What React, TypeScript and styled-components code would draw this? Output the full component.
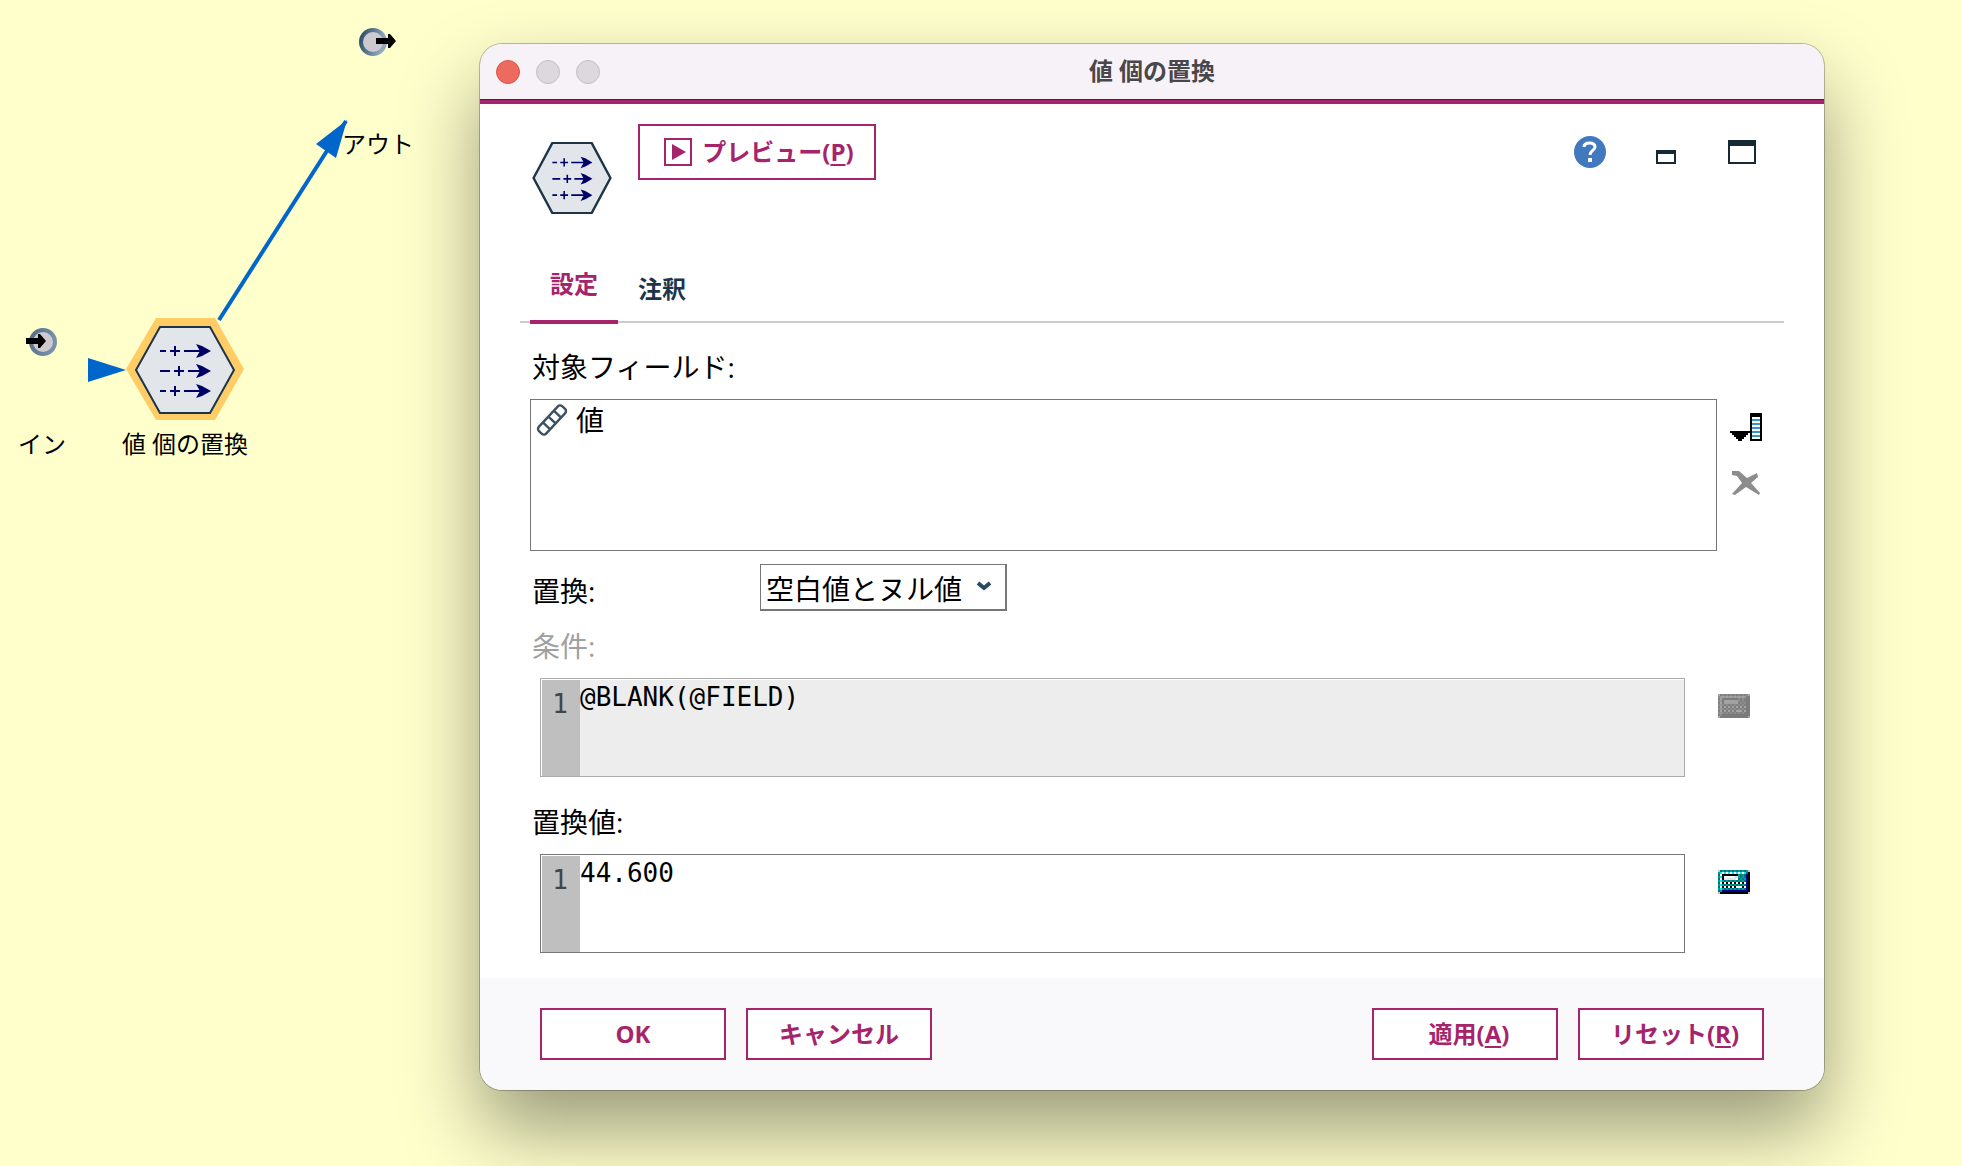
import React from "react";
import styled, { createGlobalStyle } from "styled-components";

const accent = "#a5246c";
const ink = "#1c3549";
const uiFont = `"Open Sans", "Noto Sans CJK JP", sans-serif`;
const monoFont = `"DejaVu Sans Mono", "Noto Sans CJK JP", monospace`;

const GlobalStyle = createGlobalStyle`
  *, *::before, *::after { box-sizing: border-box; }
  body { margin: 0; background: #ffffcc; }
  button, select, textarea { font: inherit; color: inherit; }
`;

/* ---------- stream canvas ---------- */

const Canvas = styled.main`
  position: relative;
  min-height: 100vh;
  overflow: hidden;
  background: #ffffcc;
  color: #000;
  font-family: ${uiFont};
  font-size: 24px;
  line-height: 36px;
`;

const Links = styled.svg`
  position: absolute;
  left: 0;
  top: 0;
`;

const Node = styled.figure<{ $x: number; $y: number; $w: number; $h: number }>`
  position: absolute;
  left: ${(p) => p.$x}px;
  top: ${(p) => p.$y}px;
  width: ${(p) => p.$w}px;
  height: ${(p) => p.$h}px;
  margin: 0;
  display: flex;
  flex-direction: column;
  align-items: center;
  justify-content: space-between;
  white-space: nowrap;
`;

/* ---------- dialog window ---------- */

const Dialog = styled.section`
  position: absolute;
  left: 480px;
  right: 138px;
  top: 44px;
  border-radius: 22px;
  background: #fff;
  box-shadow: 0 0 0 1px rgba(0, 0, 0, 0.25), 0 40px 80px rgba(0, 0, 0, 0.4);
`;

const TitleBar = styled.header`
  display: grid;
  grid-template-columns: 1fr auto 1fr;
  align-items: center;
  height: 60px;
  padding: 0 16px;
  border-bottom: 4px solid ${accent};
  border-radius: 22px 22px 0 0;
  background: #f6f2f8;
  box-shadow: inset 0 -1px 0 #82004f;
`;

const Lights = styled.div`
  display: flex;
  gap: 16px;
`;

const Light = styled.button<{ $fill: string; $edge: string }>`
  width: 24px;
  height: 24px;
  padding: 0;
  border: 1px solid ${(p) => p.$edge};
  border-radius: 50%;
  background: ${(p) => p.$fill};
`;

const Title = styled.h1`
  margin: 0;
  padding-bottom: 2px;
  font-size: 24px;
  line-height: 36px;
  font-weight: 700;
  color: #4a474b;
`;

const Toolbar = styled.div`
  display: flex;
  align-items: flex-start;
  gap: 26px;
  height: 156px;
  padding: 20px 44px 0 52px;
`;

const NodeBadge = styled.div`
  display: flex;
  padding-top: 18px;
`;

const OutlineButton = styled.button<{ $mnemonic?: boolean }>`
  display: inline-flex;
  align-items: center;
  justify-content: center;
  gap: 10px;
  width: 186px;
  height: 52px;
  padding: 0 0 0 ${(p) => (p.$mnemonic ? "8px" : "0")};
  border: 2px solid ${accent};
  background: #fff;
  color: ${accent};
  font-size: 24px;
  line-height: 36px;
  font-weight: 700;
  white-space: nowrap;

  u {
    text-decoration-thickness: 2px;
    text-underline-offset: 3px;
  }
`;

const PreviewButton = styled(OutlineButton)`
  width: 238px;
  height: 56px;
  padding-left: 4px;
`;

const WindowTools = styled.div`
  display: flex;
  margin-left: auto;
`;

const ToolButton = styled.button`
  display: flex;
  align-items: center;
  justify-content: center;
  width: 76px;
  height: 56px;
  padding: 0;
  border: 0;
  background: none;
`;

const TabBar = styled.div`
  display: flex;
  align-items: flex-end;
  height: 63px;
  margin: 0 40px;
  padding-left: 10px;
  border-bottom: 2px solid #cbcbcb;
`;

const Tab = styled.button<{ $active?: boolean }>`
  width: 88px;
  padding: 0 0 ${(p) => (p.$active ? "18px" : "14px")};
  margin-bottom: ${(p) => (p.$active ? "-3px" : "0")};
  border: 0;
  border-bottom: ${(p) => (p.$active ? `4px solid ${accent}` : "0")};
  background: none;
  color: ${(p) => (p.$active ? accent : ink)};
  font-size: 24px;
  line-height: 36px;
  font-weight: 700;
`;

const Form = styled.form`
  display: flex;
  flex-direction: column;
  padding: 26px 50px 25px;
  font-size: 28px;
  line-height: 36px;
`;

const Label = styled.label<{ $muted?: boolean }>`
  padding-left: 2px;
  color: ${(p) => (p.$muted ? "#a0a0a0" : "#000")};
`;

const Group = styled.div`
  display: flex;
  flex-direction: column;
  gap: 14px;

  & + & {
    margin-top: 27px;
  }
`;

const FieldRow = styled.div`
  display: flex;
  gap: 13px;
  padding-right: 12px;
`;

const FieldList = styled.ul`
  flex: 1;
  height: 152px;
  margin: 0;
  padding: 2px 5px;
  border: 1px solid #767676;
  list-style: none;
`;

const FieldItem = styled.li`
  display: flex;
  align-items: center;
  gap: 8px;
`;

const SideTools = styled.div`
  display: flex;
  flex-direction: column;
  gap: 24px;
  padding-top: 12px;
`;

const IconButton = styled.button`
  display: flex;
  align-items: center;
  justify-content: center;
  width: 32px;
  height: 32px;
  padding: 0;
  border: 0;
  background: none;
`;

const SelectRow = styled.div`
  display: grid;
  grid-template-columns: 230px 247px;
  margin: 13px 0 17px;

  ${Label} {
    padding-top: 9px;
  }
`;

const SelectBox = styled.div`
  position: relative;

  svg {
    position: absolute;
    right: 15px;
    top: 17px;
    pointer-events: none;
  }
`;

const Select = styled.select`
  appearance: none;
  display: block;
  width: 100%;
  height: 47px;
  padding: 4px 0 0 5px;
  border: solid #767676;
  border-width: 1px 2px 2px 1px;
  border-radius: 0;
  background: #fff;
  color: #000;
`;

const CodeRow = styled.div`
  display: flex;
  gap: 33px;
  padding: 0 24px 0 10px;
`;

const CodeTools = styled.div`
  padding-top: 12px;
`;

const Editor = styled.div<{ $muted?: boolean }>`
  flex: 1;
  display: flex;
  height: 99px;
  padding: 1px 0 0 1px;
  border: 1px solid ${(p) => (p.$muted ? "#aaaaaa" : "#767676")};
  font-family: ${monoFont};
  font-size: 26px;
`;

const Gutter = styled.div`
  width: 38px;
  padding: 6px 12px 0 0;
  background: #bfbfbf;
  color: #444;
  text-align: right;
`;

const Code = styled.textarea`
  flex: 1;
  padding: 0;
  border: 0;
  outline: 0;
  resize: none;
  background: #fff;
  color: #000;
  line-height: 34px;

  &:disabled {
    background: #ededed;
    opacity: 1;
  }
`;

const Footer = styled.footer`
  display: flex;
  gap: 20px;
  padding: 30px 60px;
  border-radius: 0 0 22px 22px;
  background: #f9f9fb;
`;

const Spacer = styled.span`
  flex: 1;
`;

/* ---------- drawings ---------- */

const arrowRow = (y: number, plus: number, dashEnd: number, lineStart: number) => (
  <g key={y}>
    <path
      d={`M26 ${y}H${dashEnd}M${plus - 5} ${y}H${plus + 5}M${plus} ${y - 5}V${y + 5}M${lineStart} ${y}H74`}
      stroke="#000066"
      strokeWidth="2"
    />
    <path
      d={`M62 ${y - 7}L68 ${y - 5}L77 ${y}L68 ${y + 5}L62 ${y + 7}L66 ${y}Z`}
      fill="#000066"
    />
  </g>
);

/* The filler node: a hexagon with three broken arrows, drawn on a 102 x 88 grid. */
const FillerHex = ({ width, height, heavy }: { width: number; height: number; heavy?: boolean }) => (
  <svg width={width} height={height} viewBox="0 0 102 88" preserveAspectRatio="none" aria-hidden="true">
    <path
      d="M2 44L26 1H76L100 44L76 87H26Z"
      fill="#e2e6ea"
      stroke={ink}
      strokeWidth={heavy ? 3 : 2}
    />
    {arrowRow(25, 41, 32, 50)}
    {arrowRow(45, 45, 36, 54)}
    {arrowRow(65, 41, 32, 50)}
  </svg>
);

const Terminal = ({ out }: { out?: boolean }) => (
  <svg width="38" height="30" viewBox="0 0 38 30" aria-hidden="true">
    <defs>
      <linearGradient id={out ? "ringOut" : "ringIn"} x1="0" y1="0" x2="1" y2="0.3">
        <stop offset="0" stopColor={out ? "#2c4a68" : "#536e88"} />
        <stop offset="1" stopColor={out ? "#92a9c0" : "#7890aa"} />
      </linearGradient>
    </defs>
    <circle
      cx={out ? 14 : 20}
      cy="15"
      r="12"
      fill="#cccace"
      stroke={`url(#${out ? "ringOut" : "ringIn"})`}
      strokeWidth="4"
    />
    <path
      d={out ? "M17 11H29V7H31L37 14L31 21H29V17H17Z" : "M3 11H15V7H17L23 14L17 21H15V17H3Z"}
      fill="#000"
    />
  </svg>
);

const calcRows = [
  "gdtdtdtdtdtdtdtg",
  "tcwcwcwcwcwcwcdk",
  "dwkkkkkkkktdtdnk",
  "tckwwwwwsstdtdnk",
  "dwksssssswdtdtnk",
  "tctdtdtdtdtdtdnk",
  "dwkwkwkwkwkwkwnk",
  "tctdtdtdtdtdtdnk",
  "dwkwkwkwkwwwkwnk",
  "tctdtdtdtdtdtdnk",
  "dtnnnnnnnnnnnnnk",
  "gkkkkkkkkkkkkkkg",
];
const calcColors: Record<string, string> = {
  g: "#c8c8c8", d: "#007474", t: "#009c9c", c: "#00f0f0", w: "#ffffff", s: "#e4e4ec", k: "#000000", n: "#000090",
};
const calcGreys: Record<string, string> = {
  g: "#a8a8a8", d: "#808080", t: "#8c8c8c", c: "#989898", w: "#a4a4a4", s: "#a0a0a0", k: "#7c7c7c", n: "#7a7a7a",
};

const Calculator = ({ muted }: { muted?: boolean }) => (
  <svg width="32" height="24" viewBox="0 0 16 12" shapeRendering="crispEdges" aria-hidden="true">
    {calcRows.map((row, y) =>
      row.split("").map((c, x) => (
        <rect key={`${x}-${y}`} x={x} y={y} width="1" height="1" fill={(muted ? calcGreys : calcColors)[c]} />
      ))
    )}
  </svg>
);

const RulerIcon = () => (
  <svg width="32" height="32" viewBox="0 0 32 32" aria-hidden="true">
    <g transform="rotate(-47 16 16)" fill="none" stroke="#3c5163" strokeWidth="2.4">
      <rect x="-1" y="11" width="34" height="10" rx="3" />
      <path d="M8 11V21M16 11V21M24 11V21" />
    </g>
  </svg>
);

const PickFieldIcon = () => (
  <svg width="32" height="28" viewBox="0 0 32 28" shapeRendering="crispEdges" aria-hidden="true">
    <path d="M20 0H32V28H20Z" fill="#000" />
    <path d="M22 4H30V26H22Z" fill="#fff" />
    <path d="M22 7H30M22 11H30M22 15H30M22 19H30M22 23H30" stroke="#3399cc" strokeWidth="2" />
    <path d="M0 18H20V20H18V22H16V24H14V26H12V28H8V26H6V24H4V22H2V20H0Z" fill="#000" />
  </svg>
);

const RemoveIcon = () => (
  <svg width="28" height="24" viewBox="0 0 28 24" aria-hidden="true">
    <path
      d="M0 0L7 0L15 7L25 2L26 6L19 12L28 22L27 24L14 16L3 24L0 23L10 12L5 5L0 4Z"
      fill="#8c8c8c"
    />
  </svg>
);

const PlayIcon = () => (
  <svg width="28" height="28" viewBox="0 0 28 28" aria-hidden="true">
    <rect x="1" y="1" width="26" height="26" fill="none" stroke={accent} strokeWidth="2" />
    <path d="M8 6L22 14L8 22Z" fill={accent} />
  </svg>
);

const HelpIcon = () => (
  <svg width="32" height="32" viewBox="0 0 32 32" aria-hidden="true">
    <circle cx="16" cy="16" r="16" fill="#4178be" />
    <path
      d="M10 11C10 8.500 12 7 15.500 7C19 7 21 8.500 21 11C21 14.500 16 14.500 16 19"
      fill="none"
      stroke="#fff"
      strokeWidth="3"
    />
    <path d="M14 22H18V26H14Z" fill="#fff" />
  </svg>
);

const MinimizeIcon = () => (
  <svg width="20" height="24" viewBox="0 0 20 24" shapeRendering="crispEdges" aria-hidden="true">
    <path d="M0 10H20V24H0ZM2 14V22H18V14Z" fill="#152935" fillRule="evenodd" />
  </svg>
);

const MaximizeIcon = () => (
  <svg width="28" height="24" viewBox="0 0 28 24" shapeRendering="crispEdges" aria-hidden="true">
    <path d="M0 0H28V24H0ZM2 6V22H26V6Z" fill="#152935" fillRule="evenodd" />
  </svg>
);

const ChevronIcon = () => (
  <svg width="16" height="12" viewBox="0 0 16 12" aria-hidden="true">
    <path d="M2 2L8 7L14 2" fill="none" stroke="#264a60" strokeWidth="4" />
  </svg>
);

export default function App() {
  return (
    <Canvas>
      <GlobalStyle />

      <Links width="440" height="440" viewBox="0 0 440 440" aria-hidden="true">
        <path d="M126 369L156 318H215L244 369L215 420H156Z" fill="#ffcc66" />
        <path d="M219 320L346 121" stroke="#0066cc" strokeWidth="4" />
        <path d="M347 120L316 144L336 158ZM88 358V382L126 370Z" fill="#0066cc" />
      </Links>
      <Node $x={18} $y={327} $w={48} $h={135}>
        <Terminal />
        <figcaption>イン</figcaption>
      </Node>
      <Node $x={342} $y={27} $w={72} $h={135}>
        <Terminal out />
        <figcaption>アウト</figcaption>
      </Node>
      <Node $x={122} $y={326} $w={126} $h={136}>
        <FillerHex width={102} height={88} />
        <figcaption>値 個の置換</figcaption>
      </Node>

      <Dialog role="dialog" aria-labelledby="dialog-title">
        <TitleBar>
          <Lights>
            <Light type="button" aria-label="閉じる" $fill="#ed6a5e" $edge="#d8574c" />
            <Light type="button" aria-label="しまう" $fill="#dcd8de" $edge="#c2bec4" />
            <Light type="button" aria-label="拡大" $fill="#dcd8de" $edge="#c2bec4" />
          </Lights>
          <Title id="dialog-title">値 個の置換</Title>
        </TitleBar>

        <Toolbar>
          <NodeBadge>
            <FillerHex width={80} height={72} heavy />
          </NodeBadge>
          <PreviewButton type="button">
            <PlayIcon />
            <span>
              プレビュー(<u>P</u>)
            </span>
          </PreviewButton>
          <WindowTools>
            <ToolButton type="button" aria-label="ヘルプ">
              <HelpIcon />
            </ToolButton>
            <ToolButton type="button" aria-label="最小化">
              <MinimizeIcon />
            </ToolButton>
            <ToolButton type="button" aria-label="最大化">
              <MaximizeIcon />
            </ToolButton>
          </WindowTools>
        </Toolbar>

        <TabBar role="tablist">
          <Tab type="button" role="tab" aria-selected="true" $active>
            設定
          </Tab>
          <Tab type="button" role="tab" aria-selected="false">
            注釈
          </Tab>
        </TabBar>

        <Form onSubmit={(e) => e.preventDefault()}>
          <Group>
            <Label as="span" id="target-label">
              対象フィールド:
            </Label>
            <FieldRow>
              <FieldList aria-labelledby="target-label">
                <FieldItem>
                  <RulerIcon />
                  値
                </FieldItem>
              </FieldList>
              <SideTools>
                <IconButton type="button" aria-label="フィールドの選択">
                  <PickFieldIcon />
                </IconButton>
                <IconButton type="button" aria-label="削除" disabled>
                  <RemoveIcon />
                </IconButton>
              </SideTools>
            </FieldRow>
          </Group>

          <SelectRow>
            <Label htmlFor="replace">置換:</Label>
            <SelectBox>
              <Select id="replace" defaultValue="blank-null">
                <option value="blank-null">空白値とヌル値</option>
              </Select>
              <ChevronIcon />
            </SelectBox>
          </SelectRow>

          <Group>
            <Label htmlFor="condition" $muted>
              条件:
            </Label>
            <CodeRow>
              <Editor $muted>
                <Gutter>1</Gutter>
                <Code id="condition" defaultValue="@BLANK(@FIELD)" disabled />
              </Editor>
              <CodeTools>
                <IconButton type="button" aria-label="条件の式ビルダー" disabled>
                  <Calculator muted />
                </IconButton>
              </CodeTools>
            </CodeRow>
          </Group>

          <Group>
            <Label htmlFor="value">置換値:</Label>
            <CodeRow>
              <Editor>
                <Gutter>1</Gutter>
                <Code id="value" defaultValue="44.600" />
              </Editor>
              <CodeTools>
                <IconButton type="button" aria-label="置換値の式ビルダー">
                  <Calculator />
                </IconButton>
              </CodeTools>
            </CodeRow>
          </Group>
        </Form>

        <Footer>
          <OutlineButton type="button">OK</OutlineButton>
          <OutlineButton type="button">キャンセル</OutlineButton>
          <Spacer />
          <OutlineButton type="button" $mnemonic>
            <span>
              適用(<u>A</u>)
            </span>
          </OutlineButton>
          <OutlineButton type="button" $mnemonic>
            <span>
              リセット(<u>R</u>)
            </span>
          </OutlineButton>
        </Footer>
      </Dialog>
    </Canvas>
  );
}
